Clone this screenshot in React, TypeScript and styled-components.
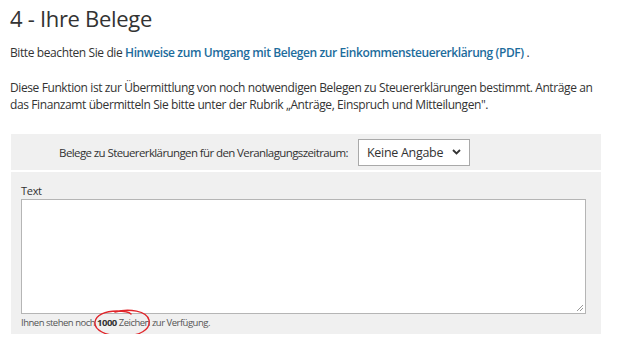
import React from "react";
import styled, { createGlobalStyle } from "styled-components";

const GlobalStyle = createGlobalStyle`
  body {
    margin: 0;
    background: #fff;
    font-family: "Open Sans", "Liberation Sans", sans-serif;
    color: #333;
  }
`;

const Page = styled.div`
  padding: 0 30px 0 10px;
  width: 591px;
`;

const Title = styled.h1`
  margin: 0;
  padding-top: 3px;
  font-size: 22px;
  font-weight: 400;
  letter-spacing: -0.3px;
  line-height: 30px;
  color: #333;
`;

const Para = styled.p<{ top: number }>`
  margin: ${(p) => p.top}px 0 0 0;
  font-size: 12px;
  letter-spacing: -0.4px;
  line-height: 17px;
  color: #333;
`;

const DocLink = styled.a`
  color: #1c6c9c;
  font-weight: 600;
  text-decoration: none;
`;

const Panel = styled.div<{ top: number }>`
  margin-top: ${(p) => p.top}px;
  background: #f0f0f0;
  margin-left: 1px;
  width: 590px;
`;

const SelectRow = styled.div`
  display: grid;
  grid-template-columns: 337px 112px;
  column-gap: 10px;
  align-items: center;
  height: 36px;
`;

const RowLabel = styled.label`
  text-align: right;
  font-size: 11.5px;
  letter-spacing: -0.6px;
  color: #333;
`;

const SelectBox = styled.div`
  box-sizing: border-box;
  height: 27px;
  border: 1px solid #a9a9a9;
  background: #fff;
  display: flex;
  align-items: center;
  justify-content: space-between;
  padding: 0 8px 0 8px;
  font-size: 12.5px;
  letter-spacing: -0.3px;
  color: #333;
`;

const TextSection = styled.div`
  padding: 11px 15px 5px 10px;
  position: relative;
`;

const FieldLabel = styled.div`
  font-size: 11px;
  letter-spacing: -0.3px;
  line-height: 16px;
  color: #333;
`;

const TextArea = styled.div`
  box-sizing: border-box;
  height: 115px;
  border: 1px solid #b5b5b5;
  background: #fff;
  position: relative;
`;

const Grip = styled.svg`
  position: absolute;
  right: 1px;
  bottom: 1px;
`;

const Hint = styled.div`
  margin-top: 3px;
  font-size: 9.5px;
  letter-spacing: -0.5px;
  line-height: 12px;
  color: #555;
  b {
    color: #333;
    font-weight: 700;
  }
`;

const Scribble = styled.svg`
  position: absolute;
  left: 80px;
  top: 136px;
`;

export default function App() {
  return (
    <Page>
      <GlobalStyle />
      <Title>4 - Ihre Belege</Title>
      <Para top={11}>
        Bitte beachten Sie die{" "}
        <DocLink href="#">
          Hinweise zum Umgang mit Belegen zur Einkommensteuererklärung (PDF)
        </DocLink>{" "}
        .
      </Para>
      <Para top={18}>
        Diese Funktion ist zur Übermittlung von noch notwendigen Belegen zu
        Steuererklärungen bestimmt. Anträge an das Finanzamt übermitteln Sie
        bitte unter der Rubrik „Anträge, Einspruch und Mitteilungen".
      </Para>
      <Panel top={21}>
        <SelectRow>
          <RowLabel>
            Belege zu Steuererklärungen für den Veranlagungszeitraum:
          </RowLabel>
          <SelectBox>
            <span>Keine Angabe</span>
            <svg width="9" height="6" viewBox="0 0 9 6">
              <path d="M1 1l3.5 3.5L8 1" fill="none" stroke="#333" strokeWidth="1.8" />
            </svg>
          </SelectBox>
        </SelectRow>
      </Panel>
      <Panel top={2}>
        <TextSection>
          <FieldLabel>Text</FieldLabel>
          <TextArea>
            <Grip width="9" height="9" viewBox="0 0 9 9">
              <path d="M8 2L2 8M8 5L5 8" stroke="#999" strokeWidth="1" />
            </Grip>
          </TextArea>
          <Hint>
            Ihnen stehen noch <b>1000</b> Zeichen zur Verfügung.
          </Hint>
          <Scribble width="72" height="34" viewBox="0 0 72 34">
            <path
              d="M24 4 C38 0, 56 3, 58 12 C60 22, 48 28, 32 28 C14 28, 3 22, 4 14 C5 7, 14 3, 26 3 C34 3, 38 4, 40 6"
              fill="none"
              stroke="#e0252a"
              strokeWidth="1.4"
              strokeLinecap="round"
            />
          </Scribble>
        </TextSection>
      </Panel>
    </Page>
  );
}
